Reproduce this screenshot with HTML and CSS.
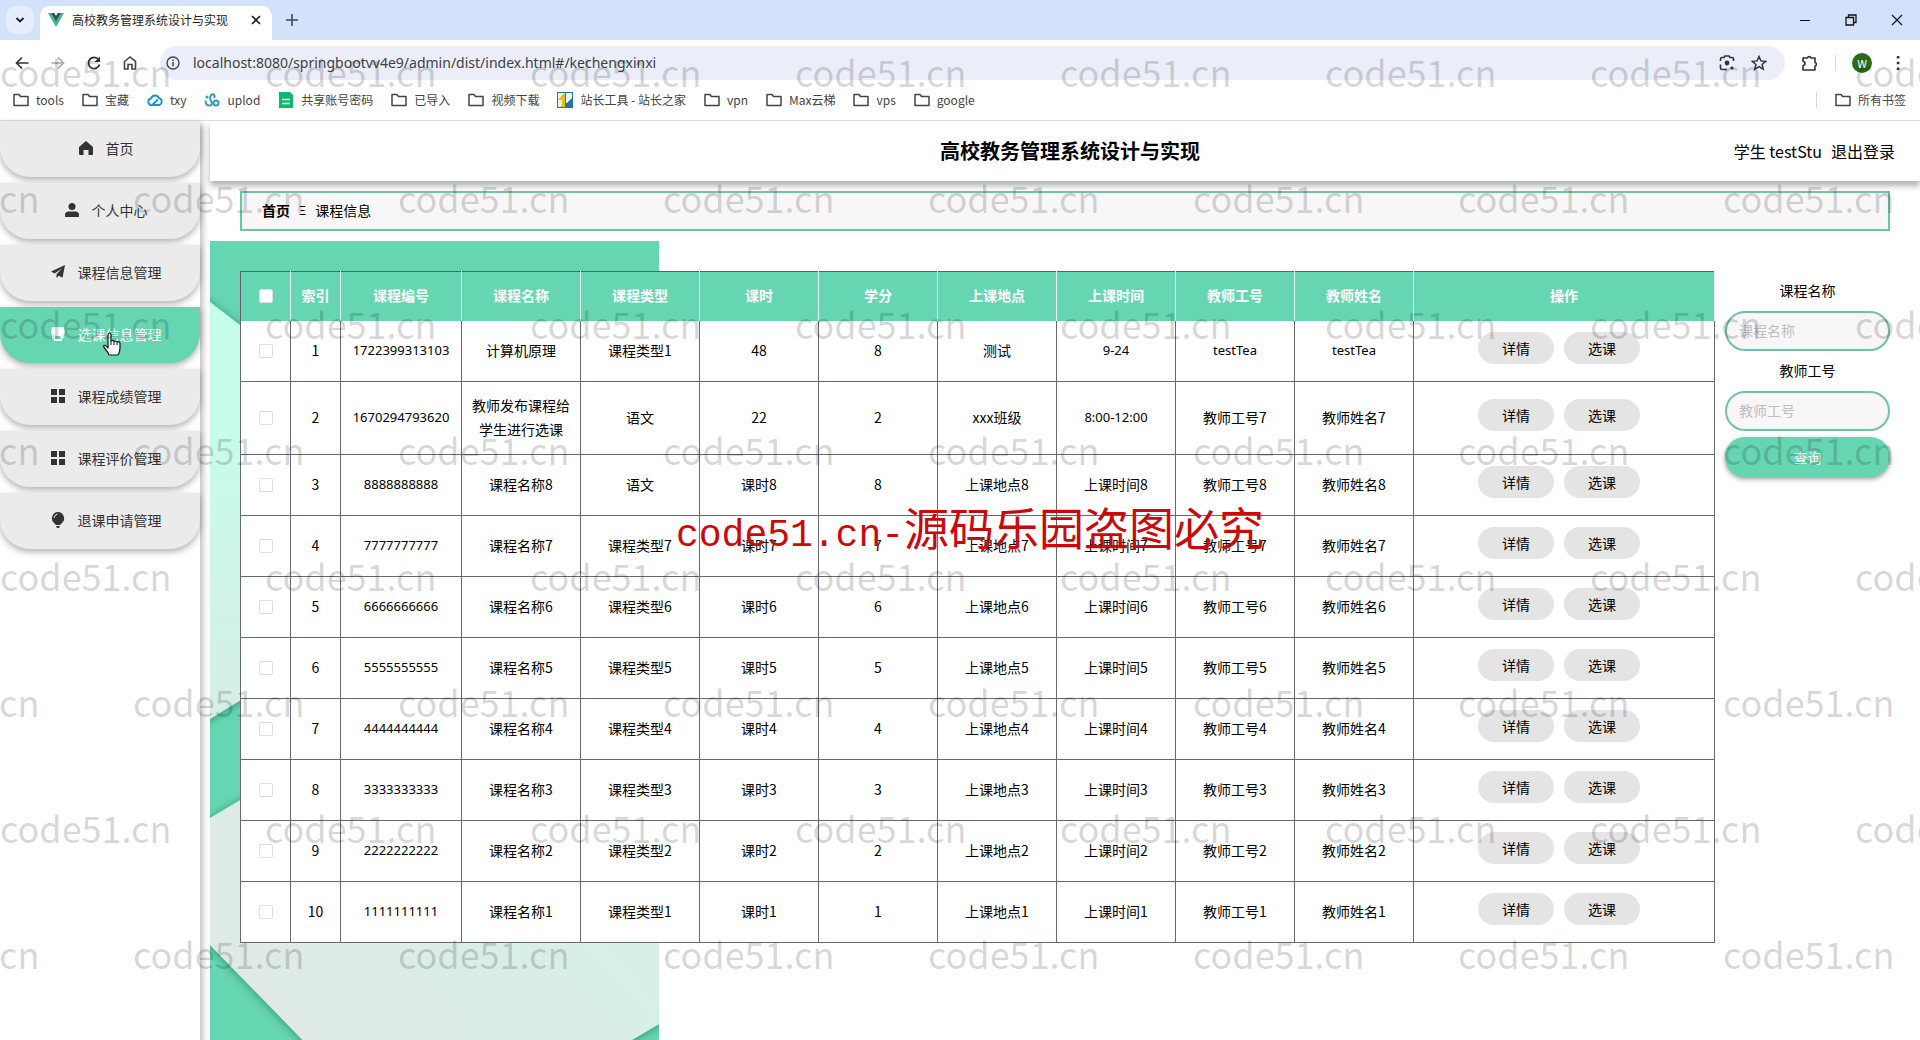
FILE: index.html
```html
<!DOCTYPE html>
<html lang="zh-CN">
<head>
<meta charset="utf-8">
<title>高校教务管理系统设计与实现</title>
<link rel="stylesheet" href="styles.css">
</head>
<body>
<svg class="defs" aria-hidden="true">
  <symbol id="i-folder" viewBox="0 0 16 16"><path d="M1 2.5h5l1.5 2H15v9H1z" fill="none" stroke="#444" stroke-width="1.5" stroke-linejoin="round"/></symbol>
  <symbol id="i-grid" viewBox="0 0 14 14"><path d="M0 0h6v6H0zM8 0h6v6H8zM0 8h6v6H0zM8 8h6v6H8z" fill="currentColor"/></symbol>
</svg>

<div class="browser">
  <div class="tabstrip">
    <button class="tab-search" aria-label="搜索标签页"><svg width="10" height="10" viewBox="0 0 10 10"><path d="M1.5 3L5 6.5 8.5 3" fill="none" stroke="#1f1f1f" stroke-width="1.8"/></svg></button>
    <div class="tab">
      <svg width="16" height="14" viewBox="0 0 16 14"><path d="M0 0h3.5L8 7.5 12.5 0H16L8 14z" fill="#41b883"/><path d="M3.2 0h3L8 3l1.800-3h3L8 8.300z" fill="#35495e"/></svg>
      <span class="tab-title">高校教务管理系统设计与实现</span>
      <button class="plain" aria-label="关闭标签页"><svg width="10" height="10" viewBox="0 0 10 10"><path d="M1 1l8 8M9 1L1 9" stroke="#1f1f1f" stroke-width="1.6"/></svg></button>
    </div>
    <button class="plain new-tab" aria-label="新标签页"><svg width="12" height="12" viewBox="0 0 12 12"><path d="M6 0v12M0 6h12" stroke="#41485a" stroke-width="1.6"/></svg></button>
    <div class="window-controls">
      <button class="plain" aria-label="最小化"><svg width="12" height="12" viewBox="0 0 12 12"><path d="M1 6.500h10" stroke="#111" stroke-width="1"/></svg></button>
      <button class="plain" aria-label="还原"><svg width="12" height="12" viewBox="0 0 12 12"><path d="M1 3.500h7.500V11H1zM3.500 3V1H11v7.500H9" fill="none" stroke="#111" stroke-width="1.300"/></svg></button>
      <button class="plain" aria-label="关闭"><svg width="12" height="12" viewBox="0 0 12 12"><path d="M1 1l10 10M11 1L1 11" stroke="#111" stroke-width="1.200"/></svg></button>
    </div>
  </div>

  <div class="toolbar">
    <button class="plain tool" aria-label="后退"><svg width="16" height="16" viewBox="0 0 16 16"><path d="M14.500 8H3M8 2.500L2.500 8 8 13.500" fill="none" stroke="#333" stroke-width="1.700"/></svg></button>
    <button class="plain tool" aria-label="前进"><svg width="16" height="16" viewBox="0 0 16 16"><path d="M1.500 8H13M8 2.500L13.500 8 8 13.500" fill="none" stroke="#aaa" stroke-width="1.700"/></svg></button>
    <button class="plain tool" aria-label="刷新"><svg width="16" height="16" viewBox="0 0 16 16"><path d="M13.500 9.500A5.600 5.600 0 1 1 12.500 4.500" fill="none" stroke="#333" stroke-width="1.800"/><path d="M14 1.500V7H8.500z" fill="#333"/></svg></button>
    <button class="plain tool" aria-label="主页"><svg width="16" height="16" viewBox="0 0 16 16"><path d="M2.500 6.500L8 2l5.500 4.500V14H10V9.500H6V14H2.500z" fill="none" stroke="#444" stroke-width="1.600"/></svg></button>
    <div class="address">
      <svg width="14" height="14" viewBox="0 0 14 14"><circle cx="7" cy="7" r="6" fill="none" stroke="#444" stroke-width="1.400"/><path d="M7 6v4.200M7 3.500v1.400" stroke="#444" stroke-width="1.500"/></svg>
      <input class="url" type="text" aria-label="地址" value="localhost:8080/springbootvv4e9/admin/dist/index.html#/kechengxinxi">
      <svg width="16" height="16" viewBox="0 0 16 16"><path d="M1.500 6V4q0-1.500 1.500-1.500h2L6 1h4l1 1.500h2q1.500 0 1.500 1.500v2M1.500 9.500V13q0 1.500 1.500 1.500h5" fill="none" stroke="#333" stroke-width="1.600"/><circle cx="8" cy="8" r="2.400" fill="#333"/><circle cx="13" cy="13" r="1.600" fill="#333"/></svg>
      <svg width="16" height="16" viewBox="0 0 16 16"><path d="M8 1.500l1.900 4.400 4.800.4-3.600 3.200 1.100 4.700L8 11.700l-4.200 2.500 1.100-4.700L1.300 6.300l4.800-.4z" fill="none" stroke="#333" stroke-width="1.500"/></svg>
    </div>
    <button class="plain" aria-label="扩展程序"><svg width="18" height="18" viewBox="0 0 18 18"><path d="M2 4h4.500a1.800 1.800 0 0 1 3.500 0H14v4.500a1.800 1.800 0 0 1 0 3.500V16H2v-4.500a2 2 0 0 0 0-4z" fill="none" stroke="#333" stroke-width="1.600" stroke-linejoin="round"/></svg></button>
    <span class="divider"></span>
    <button class="plain avatar" aria-label="个人资料">W</button>
    <button class="plain" aria-label="菜单"><svg width="4" height="16" viewBox="0 0 4 16"><path d="M.8 1h2.600v2.600H.8zM.8 6.700h2.600v2.600H.8zM.8 12.400h2.600V15H.8z" fill="#333"/></svg></button>
  </div>

  <nav class="bookmarks" aria-label="书签">
    <a href="#"><svg class="bm"><use href="#i-folder"/></svg>tools</a>
    <a href="#"><svg class="bm"><use href="#i-folder"/></svg>宝藏</a>
    <a href="#"><svg class="bm" viewBox="0 0 16 16"><path d="M4 13a3.300 3.300 0 0 1 0-6.500 4.300 4.300 0 0 1 8-.5 3.600 3.600 0 0 1 0 7H5l6-5.500" fill="none" stroke="#1397c9" stroke-width="1.800"/></svg>txy</a>
    <a href="#"><svg class="bm" viewBox="0 0 16 16"><path d="M1.500 8.500c0 3 1.500 5 4 5s3-2 1.500-4.500-1-5.500 1-6.500 3.500 1.500 2 3.500" fill="none" stroke="#2b9fb5" stroke-width="2"/><circle cx="12" cy="11" r="2.500" fill="none" stroke="#2b9fb5" stroke-width="2"/><circle cx="3" cy="5" r="1.500" fill="#2b9fb5"/></svg>uplod</a>
    <a href="#"><svg class="bm" viewBox="0 0 16 16"><path d="M1 0h11l3 3v13H1z" fill="#12b76a"/><path d="M4 7.500h8M4 11.500h8" stroke="#fff" stroke-width="1.600"/></svg>共享账号密码</a>
    <a href="#"><svg class="bm"><use href="#i-folder"/></svg>已导入</a>
    <a href="#"><svg class="bm"><use href="#i-folder"/></svg>视频下载</a>
    <a href="#"><svg class="bm" viewBox="0 0 16 16"><path d="M0 0h16v16H0z" fill="#1c7a9e"/><path d="M1 1h7v7L4 15H1z" fill="#f4f2d8"/><path d="M1 8l5-6h2v13H5V8z" fill="#e2bf23"/><path d="M9 1h6v5l-5 5H9z" fill="#e9f4f5"/></svg>站长工具 - 站长之家</a>
    <a href="#"><svg class="bm"><use href="#i-folder"/></svg>vpn</a>
    <a href="#"><svg class="bm"><use href="#i-folder"/></svg>Max云梯</a>
    <a href="#"><svg class="bm"><use href="#i-folder"/></svg>vps</a>
    <a href="#"><svg class="bm"><use href="#i-folder"/></svg>google</a>
    <span class="divider push"></span>
    <a href="#"><svg class="bm"><use href="#i-folder"/></svg>所有书签</a>
  </nav>
</div>

<div class="app">
  <aside class="sidebar">
    <ul class="menu">
      <li><a href="#"><svg width="14" height="14" viewBox="0 0 14 14"><path d="M7 0L0 6v7q0 1 1 1h3.500V9h5v5H13q1 0 1-1V6z" fill="currentColor"/></svg>首页</a></li>
      <li><a href="#"><svg width="14" height="14" viewBox="0 0 14 14"><circle cx="7" cy="3.500" r="3.500" fill="currentColor"/><path d="M0 14v-2q0-3.500 3.500-3.500h7Q14 8.500 14 12v2z" fill="currentColor"/></svg>个人中心</a></li>
      <li><a href="#"><svg width="14" height="14" viewBox="0 0 14 14"><path d="M14 0L0 6.500l3.500 2L11 3.500 5.500 9.300V13l2.300-2.300 3.700 2z" fill="currentColor"/></svg>课程信息管理</a></li>
      <li><a href="#" class="active"><svg width="14" height="14" viewBox="0 0 14 14"><path d="M1 0h12l1 5q0 1.500-1.500 2.500v4H9.500V9H4v2.500H1V7Q0 6 0 5zM3 12h8v2H3z" fill="currentColor"/></svg>选课信息管理</a></li>
      <li><a href="#"><svg width="14" height="14"><use href="#i-grid"/></svg>课程成绩管理</a></li>
      <li><a href="#"><svg width="14" height="14"><use href="#i-grid"/></svg>课程评价管理</a></li>
      <li><a href="#"><svg width="14" height="16" viewBox="0 0 14 16"><path d="M7 0a6.300 6.300 0 0 1 4 11L9 13H5L3 11A6.300 6.300 0 0 1 7 0zM5 14h4l-1 2H6z" fill="currentColor"/><path d="M3 6q.3-3 3.500-4" fill="none" stroke="#eee" stroke-width="1"/></svg>退课申请管理</a></li>
    </ul>
    <svg class="pointer" width="20" height="24" viewBox="0 0 20 24"><path d="M6 13V3q0-2 1.500-2T9 3v6q2-1.500 3 .5 2-1.300 3 .5 3-1 3 1.500V16q0 4-2 7H7q-1-3-3-5t-2.500-4q1.500-2 4.500 2z" fill="#fff" stroke="#111" stroke-width="1.200" stroke-linejoin="round"/><path d="M9 9v4M12 9.500V13M15 10v3" stroke="#111" stroke-width="1"/></svg>
  </aside>

  <main class="main">
    <header class="header">
      <h1>高校教务管理系统设计与实现</h1>
      <div class="user"><span>学生 testStu</span><a href="#">退出登录</a></div>
    </header>

    <nav class="breadcrumb" aria-label="面包屑"><a href="#">首页</a><span class="sep">Ξ</span><span>课程信息</span></nav>

    <div class="content">
      <svg class="art" width="449" height="799" viewBox="0 0 449 799" preserveAspectRatio="none" aria-hidden="true">
        <defs>
          <linearGradient id="g1" x1="0" y1="0" x2="0" y2="1"><stop offset="0.300" stop-color="#c6fdea"/><stop offset="1" stop-color="#d7eee6"/></linearGradient>
          <linearGradient id="g2" x1="0" y1="1" x2="1" y2="0"><stop offset="0" stop-color="#e2e8e4"/><stop offset="1" stop-color="#cff6e8"/></linearGradient>
          <filter id="sh" x="-10%" y="-10%" width="120%" height="120%"><feDropShadow dx="0" dy="1" stdDeviation="5" flood-color="#17654b" flood-opacity="0.600"/></filter>
        </defs>
        <path d="M0 0h449v799H0z" fill="#66d6b2"/>
        <path d="M-20 46L0 61l200 154v140L0 478l-20 12z" fill="url(#g1)" filter="url(#sh)"/>
        <path d="M-20 589L0 577l449-267v473l-27 16-10 20H112L0 704l-20-21z" fill="url(#g2)" filter="url(#sh)"/>
      </svg>

      <table class="grid">
        <colgroup><col class="c-s"><col class="c-s"><col class="c-id"><col class="c-m"><col class="c-m"><col class="c-m"><col class="c-m"><col class="c-m"><col class="c-m"><col class="c-m"><col class="c-m"><col></colgroup>
        <thead><tr><th><input type="checkbox" aria-label="全选"></th><th>索引</th><th>课程编号</th><th>课程名称</th><th>课程类型</th><th>课时</th><th>学分</th><th>上课地点</th><th>上课时间</th><th>教师工号</th><th>教师姓名</th><th>操作</th></tr></thead>
        <tbody>
        <tr><td><input type="checkbox" aria-label="选择1"></td><td>1</td><td class="num">1722399313103</td><td>计算机原理</td><td>课程类型1</td><td>48</td><td>8</td><td>测试</td><td class="num">9-24</td><td class="num">testTea</td><td class="num">testTea</td><td><div class="ops"><button>详情</button><button>选课</button></div></td></tr>
        <tr><td><input type="checkbox" aria-label="选择2"></td><td>2</td><td class="num">1670294793620</td><td>教师发布课程给学生进行选课</td><td>语文</td><td>22</td><td>2</td><td>xxx班级</td><td class="num">8:00-12:00</td><td>教师工号7</td><td>教师姓名7</td><td><div class="ops"><button>详情</button><button>选课</button></div></td></tr>
        <tr><td><input type="checkbox" aria-label="选择3"></td><td>3</td><td class="num">8888888888</td><td>课程名称8</td><td>语文</td><td>课时8</td><td>8</td><td>上课地点8</td><td>上课时间8</td><td>教师工号8</td><td>教师姓名8</td><td><div class="ops"><button>详情</button><button>选课</button></div></td></tr>
        <tr><td><input type="checkbox" aria-label="选择4"></td><td>4</td><td class="num">7777777777</td><td>课程名称7</td><td>课程类型7</td><td>课时7</td><td>7</td><td>上课地点7</td><td>上课时间7</td><td>教师工号7</td><td>教师姓名7</td><td><div class="ops"><button>详情</button><button>选课</button></div></td></tr>
        <tr><td><input type="checkbox" aria-label="选择5"></td><td>5</td><td class="num">6666666666</td><td>课程名称6</td><td>课程类型6</td><td>课时6</td><td>6</td><td>上课地点6</td><td>上课时间6</td><td>教师工号6</td><td>教师姓名6</td><td><div class="ops"><button>详情</button><button>选课</button></div></td></tr>
        <tr><td><input type="checkbox" aria-label="选择6"></td><td>6</td><td class="num">5555555555</td><td>课程名称5</td><td>课程类型5</td><td>课时5</td><td>5</td><td>上课地点5</td><td>上课时间5</td><td>教师工号5</td><td>教师姓名5</td><td><div class="ops"><button>详情</button><button>选课</button></div></td></tr>
        <tr><td><input type="checkbox" aria-label="选择7"></td><td>7</td><td class="num">4444444444</td><td>课程名称4</td><td>课程类型4</td><td>课时4</td><td>4</td><td>上课地点4</td><td>上课时间4</td><td>教师工号4</td><td>教师姓名4</td><td><div class="ops"><button>详情</button><button>选课</button></div></td></tr>
        <tr><td><input type="checkbox" aria-label="选择8"></td><td>8</td><td class="num">3333333333</td><td>课程名称3</td><td>课程类型3</td><td>课时3</td><td>3</td><td>上课地点3</td><td>上课时间3</td><td>教师工号3</td><td>教师姓名3</td><td><div class="ops"><button>详情</button><button>选课</button></div></td></tr>
        <tr><td><input type="checkbox" aria-label="选择9"></td><td>9</td><td class="num">2222222222</td><td>课程名称2</td><td>课程类型2</td><td>课时2</td><td>2</td><td>上课地点2</td><td>上课时间2</td><td>教师工号2</td><td>教师姓名2</td><td><div class="ops"><button>详情</button><button>选课</button></div></td></tr>
        <tr><td><input type="checkbox" aria-label="选择10"></td><td>10</td><td class="num">1111111111</td><td>课程名称1</td><td>课程类型1</td><td>课时1</td><td>1</td><td>上课地点1</td><td>上课时间1</td><td>教师工号1</td><td>教师姓名1</td><td><div class="ops"><button>详情</button><button>选课</button></div></td></tr>
        </tbody>
      </table>

      <form class="search">
        <label for="q-name">课程名称</label>
        <input id="q-name" type="text" placeholder="课程名称">
        <label for="q-id">教师工号</label>
        <input id="q-id" type="text" placeholder="教师工号">
        <button type="button">查询</button>
      </form>
    </div>
  </main>
</div>

<div class="watermarks" aria-hidden="true">
  <div class="wm-row"><span>code51.cn</span><span>code51.cn</span><span>code51.cn</span><span>code51.cn</span><span>code51.cn</span><span>code51.cn</span><span>code51.cn</span><span>code51.cn</span></div>
  <div class="wm-row alt"><span>code51.cn</span><span>code51.cn</span><span>code51.cn</span><span>code51.cn</span><span>code51.cn</span><span>code51.cn</span><span>code51.cn</span><span>code51.cn</span></div>
  <div class="wm-row"><span>code51.cn</span><span>code51.cn</span><span>code51.cn</span><span>code51.cn</span><span>code51.cn</span><span>code51.cn</span><span>code51.cn</span><span>code51.cn</span></div>
  <div class="wm-row alt"><span>code51.cn</span><span>code51.cn</span><span>code51.cn</span><span>code51.cn</span><span>code51.cn</span><span>code51.cn</span><span>code51.cn</span><span>code51.cn</span></div>
  <div class="wm-row"><span>code51.cn</span><span>code51.cn</span><span>code51.cn</span><span>code51.cn</span><span>code51.cn</span><span>code51.cn</span><span>code51.cn</span><span>code51.cn</span></div>
  <div class="wm-row alt"><span>code51.cn</span><span>code51.cn</span><span>code51.cn</span><span>code51.cn</span><span>code51.cn</span><span>code51.cn</span><span>code51.cn</span><span>code51.cn</span></div>
  <div class="wm-row"><span>code51.cn</span><span>code51.cn</span><span>code51.cn</span><span>code51.cn</span><span>code51.cn</span><span>code51.cn</span><span>code51.cn</span><span>code51.cn</span></div>
  <div class="wm-row alt"><span>code51.cn</span><span>code51.cn</span><span>code51.cn</span><span>code51.cn</span><span>code51.cn</span><span>code51.cn</span><span>code51.cn</span><span>code51.cn</span></div>
</div>
<div class="notice"><span class="latin">code51.cn-</span>源码乐园盗图必究</div>
</body>
</html>
```
FILE: styles.css
```css
* { box-sizing: border-box; }

body {
  margin: 0;
  min-height: 100vh;
  display: flex;
  flex-direction: column;
  position: relative;
  overflow: hidden;
  background: #fff;
  color: #000;
  font: 14px/24px "Noto Sans CJK SC", sans-serif;
}

a { color: inherit; text-decoration: none; }
button, input { font: inherit; color: inherit; }
button { cursor: pointer; }
svg { flex: none; }
.defs { position: absolute; width: 0; height: 0; }

.plain {
  display: flex;
  align-items: center;
  justify-content: center;
  border: 0;
  padding: 0;
  background: none;
}

/* Browser chrome */
.browser { border-bottom: 1px solid #dedede; }

.tabstrip {
  display: flex;
  align-items: center;
  height: 40px;
  padding-left: 6px;
  background: #d3e2fb;
}
.tab-search {
  display: flex;
  align-items: center;
  justify-content: center;
  width: 28px;
  height: 28px;
  border: 0;
  border-radius: 10px;
  background: #e6eefc;
}
.tab {
  display: flex;
  align-items: center;
  gap: 8px;
  align-self: flex-end;
  width: 232px;
  height: 34px;
  margin-left: 6px;
  padding: 0 11px 6px 8px;
  border-radius: 10px 10px 0 0;
  background: #fff;
}
.tab-title { flex: 1; font-size: 12px; line-height: 20px; color: #1f1f1f; }
.new-tab { margin-left: 14px; }
.window-controls { display: flex; gap: 34px; margin-left: auto; padding-right: 17px; }

.toolbar {
  display: flex;
  align-items: center;
  gap: 16px;
  height: 44px;
  padding: 2px 20px 0 4px;
}
.tool { width: 36px; height: 32px; margin-right: -16px; }
.address {
  display: flex;
  align-items: center;
  gap: 16px;
  flex: 1;
  height: 34px;
  margin: 0 0 0 12px;
  padding: 0 18px 0 6px;
  border-radius: 17px;
  background: #ebeef8;
}
.url {
  flex: 1;
  min-width: 0;
  border: 0;
  padding: 0;
  margin-left: -3px;
  background: none;
  outline: 0;
  color: #3c3f44;
  font: 14px/20px "Noto Sans", "Noto Sans CJK SC", sans-serif;
}
.divider { width: 1px; height: 16px; background: #cfd9ea; }
.avatar {
  width: 20px;
  height: 20px;
  margin: 0 8px 0 0;
  border-radius: 50%;
  background: #2c6a1b;
  color: #fff;
  font-size: 11px;
}
.bookmarks {
  display: flex;
  align-items: center;
  gap: 18px;
  height: 36px;
  padding: 0 14px 4px 13px;
  color: #444;
  font-size: 12px;
}
.bookmarks a { display: flex; align-items: center; gap: 7px; }
.bm { width: 16px; height: 16px; }
.push { margin-left: auto; }

/* Application frame */
.app { display: flex; flex: 1; gap: 10px; }

.sidebar {
  position: relative;
  flex: none;
  width: 200px;
  box-shadow: 3px 4px 6px rgba(0, 0, 0, .25);
}
.menu {
  display: flex;
  flex-direction: column;
  gap: 6px;
  margin: 0;
  padding: 0;
  list-style: none;
}
.menu a {
  display: flex;
  align-items: center;
  justify-content: center;
  gap: 13px;
  height: 56px;
  padding: 0 0 2px 12px;
  border-radius: 0 0 30px 30px;
  background: #ebebeb;
  box-shadow: 0 3px 6px rgba(0, 0, 0, .3);
  color: #333;
}
.menu .active { background: #66d6b2; color: #fff; }
.pointer { position: absolute; left: 102px; top: 211px; }

.main { flex: 1; min-width: 0; display: flex; flex-direction: column; }

.header {
  display: grid;
  grid-template-columns: 1fr auto 1fr;
  align-items: center;
  height: 60px;
  padding: 0 25px 0 35px;
  background: #fff;
  box-shadow: 0 5px 6px rgba(0, 0, 0, .3);
}
.header h1 { grid-column: 2; margin: 0; font-size: 20px; line-height: 30px; }
.user { display: flex; justify-content: flex-end; gap: 9px; font-size: 16px; }

.breadcrumb {
  display: flex;
  align-items: center;
  gap: 9px;
  height: 40px;
  margin: 10px 30px 0;
  padding: 0 20px 2px;
  border: 2px solid #74c2a6;
  background: #f9f6f7;
  box-shadow: inset 0 0 3px #d5fbee;
}
.breadcrumb a { font-weight: bold; }
.sep { font-size: 12px; }

.content {
  position: relative;
  display: flex;
  align-items: flex-start;
  flex: 1;
  gap: 10px;
  margin-top: 10px;
  padding: 30px 30px 80px;
}
.art { position: absolute; left: 0; top: 0; height: 100%; }

/* Course table */
.grid {
  position: relative;
  flex: 1;
  width: 0;
  table-layout: fixed;
  border-collapse: collapse;
  border: 1px solid #5c6068;
  background: #fff;
  text-align: center;
}
.c-s { width: 50px; }
.c-id { width: 121px; }
.c-m { width: 119px; }
.grid th {
  height: 49px;
  padding: 0 0 2px;
  border-right: 1px solid #e6faf3;
  background: #66d6b2;
  color: #fff;
}
.grid td {
  height: 61px;
  padding: 0 8px 2px;
  border: 1px solid #666873;
  border-top: 0;
}
.grid tr:nth-child(2) td { height: 73px; }
.grid .num { font-family: "Noto Sans", "Noto Sans CJK SC", sans-serif; font-size: 13px; }
.grid input {
  display: block;
  appearance: none;
  width: 14px;
  height: 14px;
  margin: 2px auto 0;
  border: 1px solid #dcdfe6;
  border-radius: 2px;
  background: #fff;
}
.ops { display: flex; justify-content: center; gap: 10px; padding: 0 10px 4px 0; }
.ops button {
  width: 76px;
  height: 32px;
  padding: 0;
  border: 0;
  border-radius: 16px;
  background: #e4e4e4;
}

/* Search panel */
.search {
  display: flex;
  flex-direction: column;
  flex: none;
  width: 165px;
  text-align: center;
}
.search label { height: 40px; line-height: 38px; }
.search input {
  width: 100%;
  height: 40px;
  padding: 0 12px 2px;
  border: 2px solid #74c2a6;
  border-radius: 20px;
  background: #f9f6f7;
  box-shadow: inset 0 0 3px #d5fbee;
  outline: 0;
}
.search input::placeholder { color: #bdbdc2; opacity: 1; }
.search button {
  height: 40px;
  margin-top: 6px;
  border: 0;
  border-radius: 20px;
  background: #66d6b2;
  box-shadow: 0 2px 5px rgba(0, 0, 0, .4);
  color: #fff;
}

/* Overlaid watermarks */
.watermarks {
  position: absolute;
  inset: 0;
  overflow: hidden;
  padding-top: 8px;
  pointer-events: none;
  color: rgba(0, 0, 0, .17);
  font: 36px/126px "Noto Sans CJK SC", sans-serif;
}
.wm-row { display: flex; height: 126px; }
.wm-row span { flex: none; width: 265px; }
.alt { margin-left: -132px; }

.notice {
  position: absolute;
  left: 0;
  right: 0;
  top: 497px;
  padding-left: 20px;
  text-align: center;
  pointer-events: none;
  color: #c90a0a;
  font-size: 45px;
  line-height: 60px;
}
.latin { font-family: "Liberation Mono", monospace; font-size: 38px; }
```
